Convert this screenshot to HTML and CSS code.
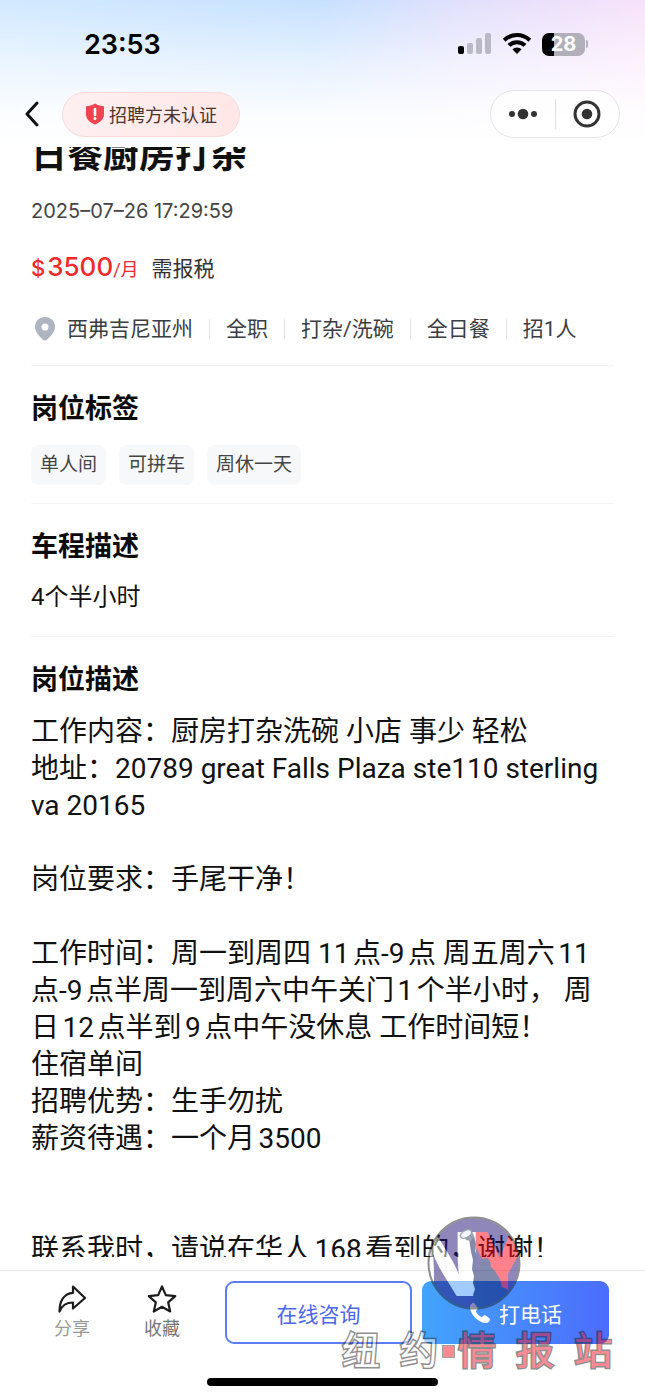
FILE: index.html
```html
<!DOCTYPE html>
<html lang="zh-CN">
<head>
    <meta charset="UTF-8">
    <meta name="viewport" content="width=device-width, initial-scale=1.0">
    <title>日餐厨房打杂</title>
    <link rel="stylesheet" href="styles.css">
</head>
<body>
    <div class="page">
        <header class="header">
            <!-- 状态栏 -->
            <div class="status-bar">
                <span class="time">23:53</span>
                <div class="status-icons">
                    <svg width="34" height="24" viewBox="0 0 34 24">
                        <rect x="0" y="14" width="6" height="8" rx="2" fill="#000"/>
                        <rect x="9" y="11" width="6" height="11" rx="2" fill="#b9b8c4"/>
                        <rect x="18" y="6" width="6" height="16" rx="2" fill="#b9b8c4"/>
                        <rect x="27" y="1" width="6" height="21" rx="2" fill="#b9b8c4"/>
                    </svg>
                    <svg width="30" height="24" viewBox="0 0 30 24" fill="none" stroke="#000" stroke-width="4">
                        <path d="M2.2 8.2a18.5 18.5 0 0 1 25.600 0"/>
                        <path d="M7 13.400a11.500 11.500 0 0 1 16 0"/>
                        <path d="M10.400 17.200a6.800 6.800 0 0 1 9.200 0L15 22z" fill="#000" stroke="none"/>
                    </svg>
                    <div class="battery"><span class="battery-body">28</span><span class="battery-cap"></span></div>
                </div>
            </div>
            <!-- 导航栏 -->
            <div class="nav-bar">
                <button class="back-btn" aria-label="返回">
                    <svg width="14" height="26" viewBox="0 0 14 26" fill="none" stroke="#111" stroke-width="3" stroke-linecap="round" stroke-linejoin="round">
                        <path d="M12 2L2 13l10 11"/>
                    </svg>
                </button>
                <div class="verify-badge">
                    <svg width="20" height="22" viewBox="0 0 20 22">
                        <path d="M10 0.500c3 2 6 2.500 9 2.700v8c0 5-4 8.300-9 10.300-5-2-9-5.300-9-10.300v-8c3-.2 6-.7 9-2.700z" fill="#ee4450"/>
                        <path d="M10 6v6" stroke="#fff" stroke-width="2.600" stroke-linecap="round"/>
                        <circle cx="10" cy="15.500" r="1.500" fill="#fff"/>
                    </svg>
                    <span>招聘方未认证</span>
                </div>
                <div class="capsule">
                    <button aria-label="更多">
                        <svg width="30" height="12" viewBox="0 0 30 12" fill="#333">
                            <circle cx="4" cy="6" r="3"/><circle cx="15" cy="6" r="5.300"/><circle cx="26" cy="6" r="3"/>
                        </svg>
                    </button>
                    <button aria-label="关闭">
                        <svg width="28" height="28" viewBox="0 0 28 28">
                            <circle cx="14" cy="14" r="12" fill="none" stroke="#333" stroke-width="3"/>
                            <circle cx="14" cy="14" r="5.300" fill="#333"/>
                        </svg>
                    </button>
                </div>
            </div>
        </header>

        <main class="content">
            <h1>日餐厨房打杂</h1>
            <p class="date">2025–07–26 17:29:59</p>
            <p class="salary"><span class="dollar">$</span><span class="amount">3500</span><span class="unit">/月</span><span class="tax">需报税</span></p>
            <ul class="meta">
                <li>
                    <svg width="22" height="26" viewBox="0 0 22 26">
                        <path d="M11 1c5.800 0 10 4.300 10 9.800 0 4.800-3.200 8.200-7.500 12.500-1.600 1.600-3.400 1.600-5 0C4.200 19 1 15.600 1 10.800 1 5.300 5.200 1 11 1z" fill="#aeb5c0"/>
                        <circle cx="11" cy="11" r="3.500" fill="#fff"/>
                    </svg>
                    西弗吉尼亚州
                </li>
                <li>全职</li>
                <li>打杂/洗碗</li>
                <li>全日餐</li>
                <li>招1人</li>
            </ul>

            <section>
                <h2>岗位标签</h2>
                <div class="tags">
                    <span class="tag">单人间</span>
                    <span class="tag">可拼车</span>
                    <span class="tag">周休一天</span>
                </div>
            </section>

            <section>
                <h2>车程描述</h2>
                <p class="drive">4个半小时</p>
            </section>

            <section>
                <h2>岗位描述</h2>
                <div class="desc">工作内容：厨房打杂洗碗 小店 事少 轻松
地址：20789 great Falls Plaza ste110 sterling va 20165

岗位要求：手尾干净！

工作时间：周一到周四 11点-9点 周五周六11点-9点半周一到周六中午关门1个半小时， 周日12点半到9点中午没休息 工作时间短！
住宿单间
招聘优势：生手勿扰
薪资待遇：一个月3500


联系我时，请说在华人168看到的，谢谢！</div>
            </section>
        </main>

        <footer class="footer">
            <div class="toolbar">
                <button class="tool">
                    <svg width="30" height="30" viewBox="0 0 30 30" fill="none" stroke="#1c1c1c" stroke-width="2.200" stroke-linejoin="round">
                        <path d="M16 2.500L28 14 16 24.500V18.500C9.500 18.500 5 21 2.500 27.500 2.500 17 7 9.500 16 8.800z"/>
                    </svg>
                    <span>分享</span>
                </button>
                <button class="tool tool-fav">
                    <svg width="30" height="30" viewBox="0 0 30 30" fill="none" stroke="#1c1c1c" stroke-width="2.200" stroke-linejoin="round">
                        <path d="M15 2.500l3.800 8.600 9.400 1-7 6.300 2 9.100L15 22.800l-8.200 4.700 2-9.100-7-6.300 9.400-1z"/>
                    </svg>
                    <span>收藏</span>
                </button>
                <button class="btn btn-chat">在线咨询</button>
                <button class="btn btn-call">
                    <svg width="22" height="22" viewBox="0 0 22 22" fill="#fff">
                        <path d="M3 1.500c1-.7 2.300-.4 3 .5l2.300 3.300c.6.9.5 1.800-.2 2.500L6.800 9.200c1.200 2.700 3.300 4.800 6 6l1.400-1.400c.7-.7 1.700-.8 2.500-.2L20 16c.9.7 1.200 2 .5 3-1.200 1.700-3 2.400-5 2C8.500 19.500 2.500 13.500 1 6.500c-.4-2 .300-3.800 2-5z"/>
                    </svg>
                    打电话
                </button>
            </div>
            <div class="home-indicator"></div>
        </footer>

        <!-- 水印 -->
        <div class="watermark">
            <svg class="wm-logo" width="94" height="94" viewBox="0 0 94 94">
                <defs>
                    <clipPath id="disc"><circle cx="47" cy="47" r="45"/></clipPath>
                </defs>
                <circle cx="47" cy="47" r="45" fill="#211177"/>
                <g clip-path="url(#disc)">
                    <text class="wm-letter" x="38" y="80" fill="#ff0818">Y</text>
                    <text class="wm-letter" x="-15" y="80" fill="#fff">N</text>
                    <path d="M42 22l5-2 2 8-1 7 2 6-1 8 1 6 3-2-1-6 3-4 5-1 3 3 1 6 4 4 5 8 2 8 5 2 4 7-3 12H46l2-8-2-5 2-6-2-6 1-7-2-7 1-9-2-8z" fill="#081560"/>
                    <path d="M35 18l9-5 3 7-3 5-5-1z" fill="#3b4567"/>
                    <ellipse cx="39" cy="18" rx="6" ry="3.500" transform="rotate(-28 39 18)" fill="#e8edf5" stroke="#3b4567" stroke-width="1.500"/>
                </g>
                <circle cx="47" cy="47" r="45.500" fill="none" stroke="#222" stroke-width="2"/>
            </svg>
            <div class="wm-text">
                <span>纽</span><span>约</span><i class="wm-dot"></i><span class="red">情</span><span class="red">报</span><span class="red">站</span>
            </div>
        </div>
    </div>
</body>
</html>
```
FILE: styles.css
```css
* {
    box-sizing: border-box;
}
body {
    margin: 0;
    background-color: #fff;
    color: #111;
    font-family: Roboto, "Noto Sans CJK SC", sans-serif;
}
h1, h2, p, ul {
    margin: 0;
    padding: 0;
}
button {
    border: none;
    background: none;
    padding: 0;
    font-family: inherit;
    cursor: pointer;
}
svg {
    display: block;
    flex-shrink: 0;
}
.page {
    position: relative;
    height: 100vh;
    display: flex;
    flex-direction: column;
    overflow: hidden;
}

/* 顶部 */
.header {
    flex-shrink: 0;
    height: 147px;
    background:
        linear-gradient(to bottom, rgba(255, 255, 255, 0) 0%, rgba(255, 255, 255, 0.55) 42%, rgba(255, 255, 255, 0.9) 75%, #fff 100%),
        linear-gradient(100deg, #d2e9ff 0%, #c6e1ff 48%, #e2e0fc 70%, #fae2fa 100%);
}
.status-bar {
    display: flex;
    justify-content: space-between;
    align-items: center;
    height: 88px;
    padding: 0 57px 0 84px;
}
.time {
    font-family: Inter, sans-serif;
    font-size: 27px;
    font-weight: 600;
    color: #000;
}
.status-icons {
    display: flex;
    align-items: center;
    gap: 10px;
}
.battery {
    display: flex;
    align-items: center;
    gap: 1px;
}
.battery-body {
    width: 43px;
    height: 23px;
    border-radius: 7px;
    background: linear-gradient(to right, #000 28%, #b1b0ba 28%);
    color: #fff;
    font-family: Inter, sans-serif;
    font-size: 20px;
    font-weight: 700;
    line-height: 23px;
    text-align: center;
}
.battery-cap {
    width: 2px;
    height: 8px;
    border-radius: 0 2px 2px 0;
    background-color: #b1b0ba;
}
.nav-bar {
    display: flex;
    align-items: center;
    height: 52px;
    padding: 0 25px;
}
.verify-badge {
    display: flex;
    align-items: center;
    justify-content: center;
    gap: 4px;
    width: 178px;
    height: 45px;
    margin-left: 23px;
    border: 1px solid #fbd9da;
    border-radius: 23px;
    background: linear-gradient(100deg, #fdf0f1, #ffe6e6);
    color: #4c342b;
    font-size: 18px;
}
.capsule {
    display: flex;
    width: 130px;
    height: 48px;
    margin-left: auto;
    border: 1px solid #e4e5ea;
    border-radius: 24px;
    background-color: rgba(255, 255, 255, 0.7);
}
.capsule button {
    flex: 1;
    display: flex;
    align-items: center;
    justify-content: center;
}
.capsule button + button {
    position: relative;
}
.capsule button + button::before {
    content: "";
    position: absolute;
    left: 0;
    top: 8px;
    bottom: 8px;
    width: 1px;
    background-color: #dddde2;
}

/* 内容 */
.content {
    flex: 1;
    min-height: 0;
    overflow: hidden;
    padding: 0 31px;
}
h1 {
    margin-top: -15px;
    font-size: 36px;
    font-weight: 700;
    line-height: 48px;
}
.date {
    margin-top: 19px;
    font-family: Inter, sans-serif;
    font-size: 20px;
    line-height: 24px;
    color: #444;
}
.salary {
    display: flex;
    align-items: baseline;
    margin-top: 26px;
    line-height: 36px;
    color: #ee2a2c;
}
.dollar {
    margin-right: 2px;
    font-family: Inter, sans-serif;
    font-size: 22px;
    font-weight: 500;
}
.amount {
    font-family: Inter, sans-serif;
    font-size: 26px;
    font-weight: 500;
}
.unit {
    font-size: 18px;
}
.tax {
    margin-left: 13px;
    font-size: 21px;
    color: #333;
}
.meta {
    display: flex;
    margin-top: 27px;
    padding-bottom: 22px;
    list-style: none;
    font-size: 21px;
    line-height: 28px;
    color: #3a3d42;
    white-space: nowrap;
}
.meta li {
    display: flex;
    align-items: center;
    text-autospace: no-autospace;
}
.meta li + li::before {
    content: "";
    width: 1px;
    height: 20px;
    margin: 0 16px;
    background-color: #e3e4e8;
}
.meta svg {
    margin: 0 11px 0 3px;
}
section {
    border-top: 1px solid #f3f4f6;
    padding-top: 25px;
}
h2 {
    font-size: 27px;
    font-weight: 700;
    line-height: 36px;
    color: #0b0b0b;
}
.tags {
    display: flex;
    gap: 13px;
    padding: 18px 0;
}
.tag {
    padding: 0 9px;
    border-radius: 8px;
    background-color: #f7f8fa;
    font-size: 19px;
    line-height: 40px;
    color: #444;
}
.drive {
    padding: 14px 0 21px;
    font-size: 24px;
    line-height: 36px;
}
.desc {
    margin-top: 15px;
    font-size: 28px;
    line-height: 37px;
    white-space: pre-wrap;
    text-autospace: normal;
}

/* 底部 */
.footer {
    flex-shrink: 0;
    padding: 13px 0 12px;
}
.toolbar {
    display: flex;
    align-items: flex-start;
    height: 108px;
    padding: 10px 36px 0 27px;
    border-top: 1px solid #e8e8ea;
}
.tool {
    display: flex;
    flex-direction: column;
    align-items: center;
    width: 90px;
    padding-top: 3px;
    font-size: 18px;
    line-height: 24px;
    color: #999;
}
.tool svg {
    margin-bottom: 3px;
}
.tool-fav {
    margin-right: 18px;
    color: #777;
}
.btn {
    flex: 1;
    display: flex;
    align-items: center;
    justify-content: center;
    height: 63px;
    border-radius: 9px;
    font-size: 21px;
    font-weight: 400;
}
.btn-chat {
    border: 2px solid #5b7cf3;
    color: #4a68ec;
}
.btn-call {
    gap: 8px;
    margin-left: 10px;
    padding: 0 2px;
    background: linear-gradient(to right, #42a4fb, #4c6cfd);
    color: #fff;
}
.home-indicator {
    width: 231px;
    height: 8px;
    margin: 0 auto;
    border-radius: 4px;
    background-color: #000;
}

/* 水印浮层 */
.watermark {
    position: absolute;
    right: 33px;
    bottom: 22px;
    opacity: 0.5;
    pointer-events: none;
}
.wm-logo {
    margin-left: 85px;
}
.wm-letter {
    font-family: Inter, sans-serif;
    font-size: 88px;
    font-weight: 900;
}
.wm-text {
    display: flex;
    align-items: center;
    gap: 20px;
    margin-top: 16px;
    font-size: 38px;
    line-height: 50px;
    font-weight: 400;
}
.wm-text span {
    color: #fff;
    -webkit-text-stroke: 3px #222;
    paint-order: stroke fill;
}
.wm-text .red {
    color: #f8182c;
}
.wm-dot {
    width: 13px;
    height: 13px;
    margin: 0 -17px 0 -16px;
    border: 1px solid #444;
    background-color: #f8182c;
}
```
